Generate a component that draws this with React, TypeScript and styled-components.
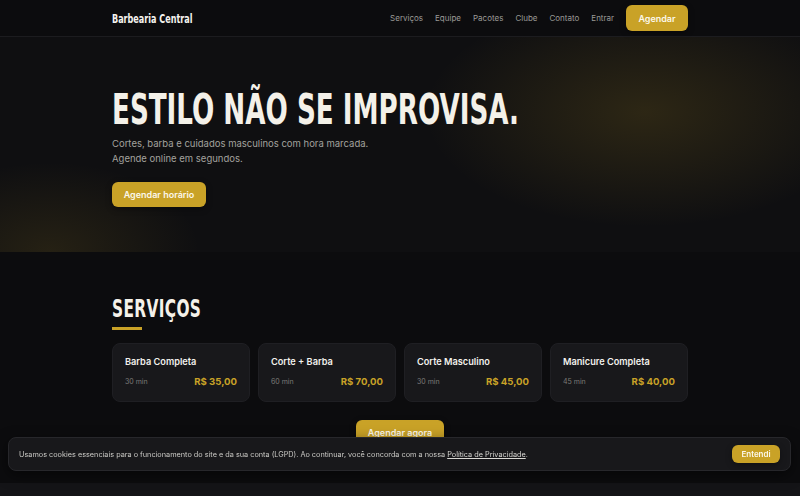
import React from "react";
import styled, { createGlobalStyle } from "styled-components";

const Global = createGlobalStyle`
  * { box-sizing: border-box; }
  html, body { margin: 0; padding: 0; background: #0c0c0e; }
  body { font-family: Inter, "Noto Sans", sans-serif; color: #f3f1ea; }
`;

const gold = "#c9a227";
const condensed = `"DejaVu Sans Condensed", "Liberation Sans", sans-serif`;

const Container = styled.div`
  width: 576px;
  margin: 0 auto;
`;

const Header = styled.header`
  height: 37px;
  background: #0c0c0e;
  border-bottom: 1px solid #1c1c1f;
`;

const HeaderInner = styled(Container)`
  height: 100%;
  display: flex;
  align-items: center;
  justify-content: space-between;
`;

const Logo = styled.div`
  font-family: ${condensed};
  font-weight: 700;
  font-size: 13px;
  color: #f5f3ee;
  white-space: nowrap;
  transform: scaleX(0.69);
  transform-origin: left center;
`;

const Nav = styled.nav`
  display: flex;
  align-items: center;
  gap: 12px;
`;

const NavLink = styled.a`
  font-size: 8px;
  color: #9b9a96;
  text-decoration: none;
`;

const GoldButton = styled.button<{ $h: number; $w: number; $fs?: number }>`
  height: ${(p) => p.$h}px;
  width: ${(p) => p.$w}px;
  border: none;
  border-radius: 6px;
  background: ${gold};
  color: #fbf7ea;
  font-family: Inter, sans-serif;
  font-weight: 600;
  font-size: ${(p) => p.$fs ?? 9}px;
  padding: 0;
  box-shadow: 0 2px 6px rgba(0, 0, 0, 0.35);
  cursor: pointer;
`;

const Hero = styled.section`
  height: 215px;
  background:
    radial-gradient(ellipse 220px 115px at 645px 75px, rgba(201, 162, 39, 0.16), rgba(201, 162, 39, 0) 100%),
    radial-gradient(ellipse 150px 90px at 50px 215px, rgba(201, 162, 39, 0.12), rgba(201, 162, 39, 0) 100%),
    #0f0f11;
  padding-top: 52px;
`;

const Title = styled.h1`
  margin: 0;
  font-family: ${condensed};
  font-weight: 700;
  font-size: 42px;
  line-height: 42px;
  color: #f4f1e9;
  white-space: nowrap;
  transform: scaleX(0.693);
  transform-origin: left center;
`;

const Lead = styled.p`
  margin: 5px 0 0;
  font-size: 9.5px;
  line-height: 15px;
  color: #a3a29e;
`;

const HeroActions = styled.div`
  margin-top: 16px;
`;

const Services = styled.section`
  background: #0c0c0e;
  padding-top: 43px;
  padding-bottom: 38px;
`;

const SectionTitle = styled.h2`
  margin: 0;
  font-family: ${condensed};
  font-weight: 700;
  font-size: 25px;
  line-height: 28px;
  letter-spacing: 0.5px;
  color: #f4f1e9;
  white-space: nowrap;
  transform: scaleX(0.684);
  transform-origin: left center;
`;

const Underline = styled.div`
  width: 30px;
  height: 2.5px;
  background: ${gold};
  margin-top: 4px;
`;

const Grid = styled.div`
  margin-top: 13px;
  display: grid;
  grid-template-columns: repeat(4, 1fr);
  gap: 8px;
`;

const Card = styled.div`
  height: 59px;
  background: #18181b;
  border: 1px solid #1f1f23;
  border-radius: 8px;
  padding: 12px 12px 0 12px;
`;

const CardTitle = styled.div`
  font-size: 9.2px;
  font-weight: 600;
  color: #f2f1ed;
`;

const CardRow = styled.div`
  margin-top: 9px;
  display: flex;
  align-items: center;
  justify-content: space-between;
`;

const Duration = styled.span`
  font-size: 7px;
  color: #7c7b78;
`;

const Price = styled.span`
  font-size: 9.6px;
  font-weight: 700;
  color: ${gold};
`;

const Center = styled.div`
  display: flex;
  justify-content: center;
  margin-top: 18px;
`;

const Footer = styled.footer`
  height: 60px;
  background: #141417;
`;

const Cookie = styled.div`
  position: fixed;
  left: 8px;
  right: 9px;
  bottom: 25px;
  height: 34px;
  background: #18181b;
  border: 1px solid #27272b;
  border-radius: 8px;
  display: flex;
  align-items: center;
  justify-content: space-between;
  padding: 0 10px 0 10px;
  box-shadow: 0 4px 14px rgba(0, 0, 0, 0.5);
`;

const CookieText = styled.p`
  margin: 0;
  font-size: 7.3px;
  color: #c9c8c4;
  a {
    color: #d8d7d3;
    text-decoration: underline;
  }
`;

const services = [
  { name: "Barba Completa", time: "30 min", price: "R$ 35,00" },
  { name: "Corte + Barba", time: "60 min", price: "R$ 70,00" },
  { name: "Corte Masculino", time: "30 min", price: "R$ 45,00" },
  { name: "Manicure Completa", time: "45 min", price: "R$ 40,00" },
];

export default function App() {
  return (
    <>
      <Global />
      <Header>
        <HeaderInner>
          <Logo>Barbearia Central</Logo>
          <Nav>
            <NavLink>Serviços</NavLink>
            <NavLink>Equipe</NavLink>
            <NavLink>Pacotes</NavLink>
            <NavLink>Clube</NavLink>
            <NavLink>Contato</NavLink>
            <NavLink>Entrar</NavLink>
            <GoldButton $h={26} $w={62}>Agendar</GoldButton>
          </Nav>
        </HeaderInner>
      </Header>
      <Hero>
        <Container>
          <Title>ESTILO NÃO SE IMPROVISA.</Title>
          <Lead>
            Cortes, barba e cuidados masculinos com hora marcada.
            <br />
            Agende online em segundos.
          </Lead>
          <HeroActions>
            <GoldButton $h={25} $w={94}>Agendar horário</GoldButton>
          </HeroActions>
        </Container>
      </Hero>
      <Services>
        <Container>
          <SectionTitle>SERVIÇOS</SectionTitle>
          <Underline />
          <Grid>
            {services.map((s) => (
              <Card key={s.name}>
                <CardTitle>{s.name}</CardTitle>
                <CardRow>
                  <Duration>{s.time}</Duration>
                  <Price>{s.price}</Price>
                </CardRow>
              </Card>
            ))}
          </Grid>
          <Center>
            <GoldButton $h={25} $w={88}>Agendar agora</GoldButton>
          </Center>
        </Container>
      </Services>
      <Footer />
      <Cookie>
        <CookieText>
          Usamos cookies essenciais para o funcionamento do site e da sua conta (LGPD). Ao continuar, você concorda com a nossa{" "}
          <a>Política de Privacidade</a>.
        </CookieText>
        <GoldButton $h={18} $w={48} $fs={8}>Entendi</GoldButton>
      </Cookie>
    </>
  );
}
